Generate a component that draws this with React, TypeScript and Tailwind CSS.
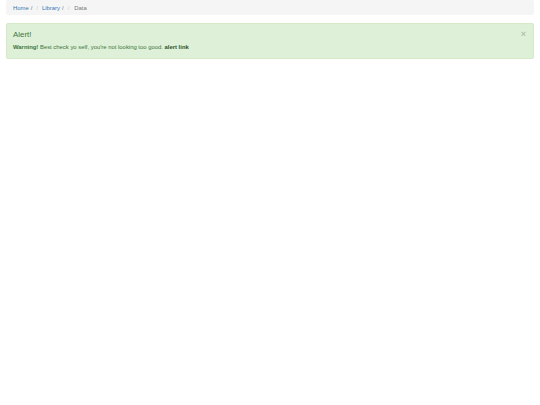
import React from 'react';

const crumbs = ['Home', 'Library'];

const App: React.FC = () => {
  return (
    <div className="min-h-screen bg-white px-[6px] font-['Liberation_Sans',Arial,sans-serif] text-[5.9px] leading-[8.8px] text-[#333]">
      <ol className="flex items-center rounded-[2px] bg-[#f5f5f5] px-[7px] pt-[4px] pb-[2px] h-[15px] mb-[8px]">
        {crumbs.map((c) => (
          <li key={c} className="flex items-center">
            <a href="#" className="text-[#337ab7]">{c}</a>
            <span className="ml-[2px] text-[#777]">/</span>
            <span className="px-[4px] text-[#ccc]">/</span>
          </li>
        ))}
        <li className="ml-[1px] text-[#777]">Data</li>
      </ol>
      <div className="relative rounded-[2px] border border-[#d6e9c6] bg-[#dff0d8] pl-[6px] pr-[15px] pt-[6px] pb-[6px] text-[#3c763d]">
        <button className="absolute right-[7px] top-[6px] text-[9px] font-bold leading-[9px] text-black opacity-20">
          ×
        </button>
        <h4 className="text-[7.9px] leading-[9px] mb-[4px]">Alert!</h4>
        <p>
          <strong>Warning!</strong> Best check yo self, you're not looking too good.{' '}
          <a href="#" className="font-bold text-[#2b542c]">alert link</a>
        </p>
      </div>
    </div>
  );
};

export default App;
